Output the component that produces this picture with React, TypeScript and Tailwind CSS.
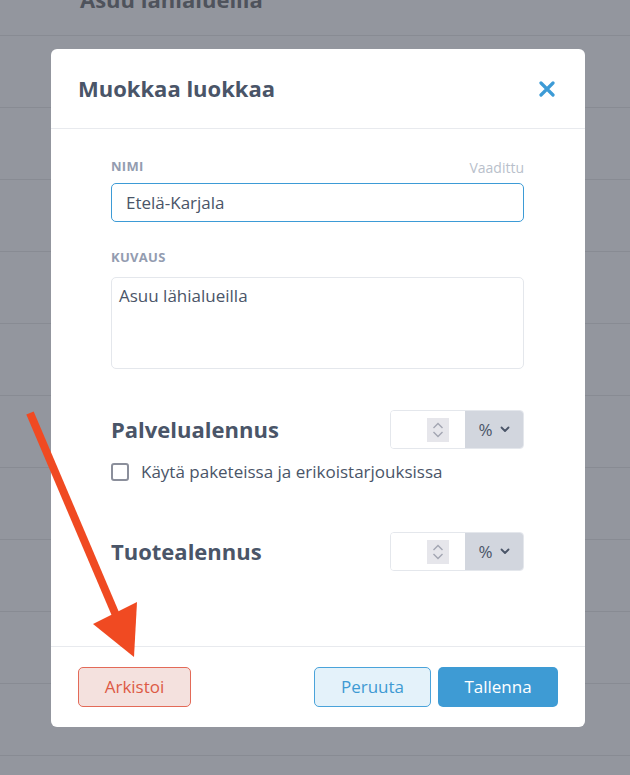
import React from "react";

const font = { fontFamily: '"Open Sans", "Noto Sans", sans-serif' };

function Spinner() {
  return (
    <div className="w-[22px] h-[24px] bg-[#e6e6eb] flex flex-col items-center justify-center gap-[2px]">
      <svg width="12" height="7" viewBox="0 0 12 7" fill="none">
        <path d="M1.5 6L6 1.5L10.5 6" stroke="#a3a6b2" strokeWidth="1.4" />
      </svg>
      <svg width="12" height="7" viewBox="0 0 12 7" fill="none">
        <path d="M1.5 1L6 5.5L10.5 1" stroke="#a3a6b2" strokeWidth="1.4" />
      </svg>
    </div>
  );
}

function DiscountRow({ label }: { label: string }) {
  return (
    <div className="flex items-center justify-between h-[39px]">
      <div className="text-[22px] font-bold text-[#4a5568]">{label}</div>
      <div className="flex h-[39px] border border-[#e4e7ec] rounded-[4px] overflow-hidden">
        <div className="w-[74px] bg-white flex items-center justify-end pr-[16px]">
          <Spinner />
        </div>
        <div className="w-[58px] bg-[#d2d6de] flex items-center justify-center gap-[7px] text-[17px] text-[#4a5568]">
          <span>%</span>
          <svg width="10" height="7" viewBox="0 0 10 7" fill="none">
            <path d="M1.5 1.5L5 5L8.5 1.5" stroke="#4a5568" strokeWidth="1.8" strokeLinecap="round" strokeLinejoin="round" />
          </svg>
        </div>
      </div>
    </div>
  );
}

export default function App() {
  const rows = Array.from({ length: 12 });
  return (
    <div className="relative w-[630px] h-[775px] overflow-hidden bg-[#93969e]" style={font}>
      <div className="-mt-[36px]">
        {rows.map((_, i) => (
          <div key={i} className="h-[72px] border-b border-[#888b93] flex items-center pl-[80px]">
            {i === 0 && <span className="text-[22px] font-bold text-[#4f535c]">Asuu lähialueilla</span>}
          </div>
        ))}
      </div>

      <div className="absolute left-[51px] top-[49px] w-[534px] h-[678px] bg-white rounded-[6px] flex flex-col">
        <div className="h-[80px] flex items-center justify-between pl-[27px] pr-[30px] border-b border-[#e8eaee]">
          <h2 className="text-[22px] font-bold text-[#4a5568]">Muokkaa luokkaa</h2>
          <svg width="16" height="16" viewBox="0 0 16 16" fill="none">
            <path d="M2 2L14 14M14 2L2 14" stroke="#3d9bd6" strokeWidth="3.2" strokeLinecap="round" />
          </svg>
        </div>

        <div className="flex-1 pl-[60px] pr-[61px] pt-[29px]">
          <div className="flex items-center justify-between h-[18px] mb-[7px]">
            <span className="text-[13px] font-bold text-[#939cb0] tracking-[0.3px]">NIMI</span>
            <span className="text-[14px] text-[#b9bfcb]">Vaadittu</span>
          </div>
          <div className="h-[39px] border border-[#3d9bd6] rounded-[5px] flex items-center pl-[14px] text-[17px] text-[#4a5568]">
            Etelä-Karjala
          </div>

          <div className="flex items-center h-[18px] mt-[27px] mb-[10px]">
            <span className="text-[13px] font-bold text-[#939cb0] tracking-[0.3px]">KUVAUS</span>
          </div>
          <div className="h-[92px] border border-[#e4e7ec] rounded-[5px] pl-[7px] pt-[5px] text-[17px] text-[#4a5568]">
            Asuu lähialueilla
          </div>

          <div className="mt-[41px]">
            <DiscountRow label="Palvelualennus" />
          </div>
          <div className="mt-[14px] flex items-center gap-[12px] h-[18px]">
            <div className="w-[18px] h-[18px] border-2 border-[#8b8f9b] rounded-[3px]" />
            <span className="text-[17px] text-[#4a5568]">Käytä paketeissa ja erikoistarjouksissa</span>
          </div>

          <div className="mt-[51px]">
            <DiscountRow label="Tuotealennus" />
          </div>
        </div>

        <div className="h-[81px] border-t border-[#e8eaee] flex items-start justify-between pt-[20px] pl-[27px] pr-[27px]">
          <button className="w-[113px] h-[40px] bg-[#f4e1de] border border-[#e36a58] rounded-[5px] text-[17px] text-[#dd5a45]">
            Arkistoi
          </button>
          <div className="flex gap-[7px]">
            <button className="w-[117px] h-[40px] bg-[#e4f2fa] border border-[#4aa3da] rounded-[5px] text-[17px] text-[#3e9ad3]">
              Peruuta
            </button>
            <button className="w-[120px] h-[40px] bg-[#3e9bd4] rounded-[5px] text-[17px] text-white">
              Tallenna
            </button>
          </div>
        </div>
      </div>

      <svg className="absolute inset-0 pointer-events-none" width="630" height="775" viewBox="0 0 630 775">
        <line x1="30" y1="413" x2="118" y2="620" stroke="#f04a22" strokeWidth="8" />
        <polygon points="93,624 137,602 134,657" fill="#f04a22" />
      </svg>
    </div>
  );
}
